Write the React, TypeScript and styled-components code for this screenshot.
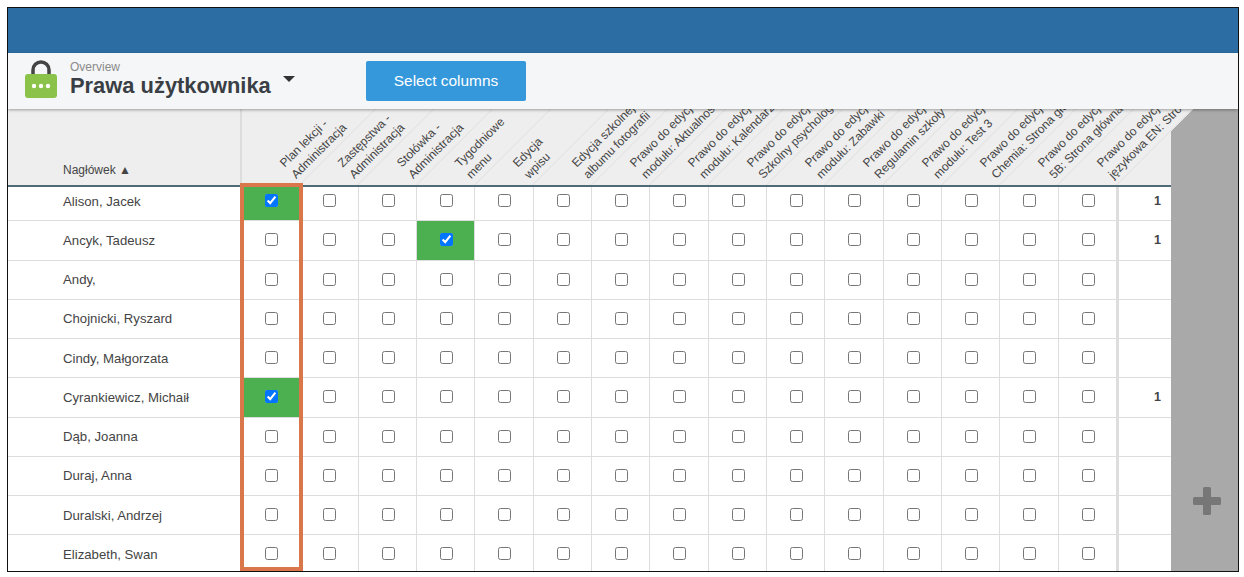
import React from 'react';
import styled, { createGlobalStyle } from 'styled-components';

const GlobalStyle = createGlobalStyle`
  html, body {
    margin: 0;
    padding: 0;
    background: #fff;
    font-family: "Liberation Sans", Arial, sans-serif;
    overflow: hidden;
  }
`;

const Frame = styled.div`
  position: relative;
  display: flex;
  flex-direction: column;
  box-sizing: border-box;
  width: 1232px;
  height: 565px;
  margin: 7px 0 0 7px;
  border: 1px solid #111;
  overflow: hidden;
`;

const TopBar = styled.div`
  flex: none;
  height: 45px;
  background: #2c6ea3;
`;

const SubHeader = styled.div`
  position: relative;
  z-index: 3;
  flex: none;
  display: flex;
  align-items: center;
  box-sizing: border-box;
  height: 56px;
  padding: 0 0 0 16px;
  background: #f5f6f8;
  box-shadow: 0 1px 3px rgba(0, 0, 0, 0.35);
`;

const LockIcon = styled.svg`
  flex: none;
  width: 34px;
  height: 40px;
  margin-top: -3px;
`;

const TitleBlock = styled.div`
  align-self: flex-start;
  display: flex;
  flex-direction: column;
  margin: 8px 0 0 12px;
  width: 296px;
`;

const Overline = styled.div`
  font-size: 12px;
  line-height: 13px;
  margin-bottom: -1px;
  color: #8a8a8a;
`;

const TitleRow = styled.div`
  display: flex;
  align-items: flex-start;
`;

const Title = styled.div`
  font-size: 21.9px;
  font-weight: 700;
  line-height: 26px;
  color: #3a3f45;
`;

const Caret = styled.span`
  width: 0;
  height: 0;
  margin: 3px 0 0 12px;
  border-left: 6px solid transparent;
  border-right: 6px solid transparent;
  border-top: 6px solid #333;
`;

const SelectButton = styled.button`
  width: 160px;
  height: 40px;
  padding: 0;
  border: none;
  border-radius: 2px;
  background: #3498db;
  color: #fff;
  font: 15.4px "Liberation Sans", Arial, sans-serif;
`;

const Content = styled.div`
  flex: 1;
  min-height: 0;
  display: flex;
`;

const Table = styled.div`
  position: relative;
  z-index: 1;
  flex: none;
  width: 1163px;
  display: flex;
  flex-direction: column;
`;

const HeadRow = styled.div`
  flex: none;
  display: flex;
  box-sizing: border-box;
  height: 78px;
  background: #eee;
  border-bottom: 2px solid #4f6b78;
  overflow-x: visible;
  overflow-y: clip;
  color: #444;
  font-size: 12px;
`;

const NameHead = styled.div`
  flex: none;
  box-sizing: border-box;
  width: 234px;
  padding: 54px 0 0 55px;
  border-right: 2px solid #ddd;
  line-height: 14px;
`;

const HeadCell = styled.div`
  position: relative;
  flex: 1 1 0;
  min-width: 0;

  &::before {
    content: '';
    position: absolute;
    inset: 0;
    border-right: 1px solid #ddd;
    transform: skewX(-45deg);
    transform-origin: bottom left;
  }
`;

const HeadLabel = styled.div`
  position: absolute;
  left: 57px;
  bottom: 3px;
  white-space: pre;
  line-height: 16px;
  transform: rotate(-45deg);
  transform-origin: bottom left;
`;

const LastHead = styled.div`
  flex: none;
  width: 54px;
`;

const RowsViewport = styled.div`
  flex: 1;
  min-height: 0;
  overflow: hidden;
  background: #fff;
`;

const RowsInner = styled.div`
  margin-top: -5px;
`;

const Row = styled.div`
  display: flex;
  box-sizing: border-box;
  height: 39.25px;
  border-bottom: 1px solid #ddd;
  color: #444;
  font-size: 13.2px;
`;

const NameCell = styled.div`
  flex: none;
  display: flex;
  align-items: center;
  box-sizing: border-box;
  width: 234px;
  padding-left: 55px;
`;

const CheckCell = styled.div<{ $on: boolean }>`
  flex: 1 1 0;
  min-width: 0;
  display: flex;
  align-items: center;
  justify-content: center;
  box-sizing: border-box;
  padding-left: 2px;
  border-right: 1px solid #ddd;
  background: ${(p) => (p.$on ? '#4caf50' : 'transparent')};
`;

const Check = styled.input`
  width: 13px;
  height: 13px;
  margin: 0 0 1px;
`;

const TotalCell = styled.div`
  flex: none;
  display: flex;
  align-items: center;
  justify-content: flex-end;
  box-sizing: border-box;
  width: 54px;
  padding-right: 10px;
  border-left: 2px solid #ddd;
  font-size: 12.5px;
  font-weight: 700;
`;

const SidePanel = styled.div`
  position: relative;
  flex: 1;
  display: flex;
  align-items: flex-end;
  justify-content: center;
  box-sizing: border-box;
  padding: 0 0 56px 5px;
  background: #a9a9a9;

  &::before {
    content: '';
    position: absolute;
    top: 0;
    left: 0;
    width: 22px;
    height: 23px;
    background: linear-gradient(to bottom right, #eee 50%, transparent 50%);
  }
`;

const PlusIcon = styled.svg`
  width: 28px;
  height: 28px;
`;

const OrangeBox = styled.div`
  position: absolute;
  z-index: 2;
  left: 232px;
  top: 175px;
  bottom: 0;
  box-sizing: border-box;
  width: 63px;
  border: 4px solid #d9764a;
`;

const columns = [
  'Plan lekcji -\nAdministracja',
  'Zastępstwa -\nAdministracja',
  'Stołówka -\nAdministracja',
  'Tygodniowe\nmenu',
  'Edycja\nwpisu',
  'Edycja szkolnej\nalbumu fotografii',
  'Prawo do edycji\nmodułu: Aktualności',
  'Prawo do edycji\nmodułu: Kalendarz',
  'Prawo do edycji\nSzkolny psycholog',
  'Prawo do edycji\nmodułu: Zabawki',
  'Prawo do edycji\nRegulamin szkoły',
  'Prawo do edycji\nmodułu: Test 3',
  'Prawo do edycji\nChemia: Strona główna',
  'Prawo do edycji\n5B: Strona główna',
  'Prawo do edycji\njęzykowa EN: Strona',
];

const people: { name: string; checked?: number }[] = [
  { name: 'Alison, Jacek', checked: 0 },
  { name: 'Ancyk, Tadeusz', checked: 3 },
  { name: 'Andy,' },
  { name: 'Chojnicki, Ryszard' },
  { name: 'Cindy, Małgorzata' },
  { name: 'Cyrankiewicz, Michaił', checked: 0 },
  { name: 'Dąb, Joanna' },
  { name: 'Duraj, Anna' },
  { name: 'Duralski, Andrzej' },
  { name: 'Elizabeth, Swan' },
];

const App = () => {
  return (
    <Frame>
      <GlobalStyle />
      <TopBar />
      <SubHeader>
        <LockIcon viewBox="0 0 34 40">
          <path d="M9 16V10a8 8 0 0 1 16 0v6" fill="none" stroke="#444" strokeWidth="3.5" />
          <rect x="1" y="14" width="32" height="24" rx="3" fill="#8bc34a" />
          <circle cx="10" cy="26" r="2.2" fill="#fff" />
          <circle cx="17" cy="26" r="2.2" fill="#fff" />
          <circle cx="24" cy="26" r="2.2" fill="#fff" />
        </LockIcon>
        <TitleBlock>
          <Overline>Overview</Overline>
          <TitleRow>
            <Title>Prawa użytkownika</Title>
            <Caret />
          </TitleRow>
        </TitleBlock>
        <SelectButton>Select columns</SelectButton>
      </SubHeader>
      <Content>
        <Table>
          <HeadRow>
            <NameHead>Nagłówek ▲</NameHead>
            {columns.map((label) => (
              <HeadCell key={label}>
                <HeadLabel>{label}</HeadLabel>
              </HeadCell>
            ))}
            <LastHead />
          </HeadRow>
          <RowsViewport>
            <RowsInner>
              {people.map((person) => (
                <Row key={person.name}>
                  <NameCell>{person.name}</NameCell>
                  {columns.map((label, i) => (
                    <CheckCell key={label} $on={person.checked === i}>
                      <Check type="checkbox" readOnly checked={person.checked === i} />
                    </CheckCell>
                  ))}
                  <TotalCell>{person.checked !== undefined ? 1 : ''}</TotalCell>
                </Row>
              ))}
            </RowsInner>
          </RowsViewport>
        </Table>
        <SidePanel>
          <PlusIcon viewBox="0 0 28 28">
            <rect x="10" y="0" width="8" height="28" rx="1.5" fill="#777" />
            <rect x="0" y="10" width="28" height="8" rx="1.5" fill="#777" />
          </PlusIcon>
        </SidePanel>
      </Content>
      <OrangeBox />
    </Frame>
  );
};

export default App;
